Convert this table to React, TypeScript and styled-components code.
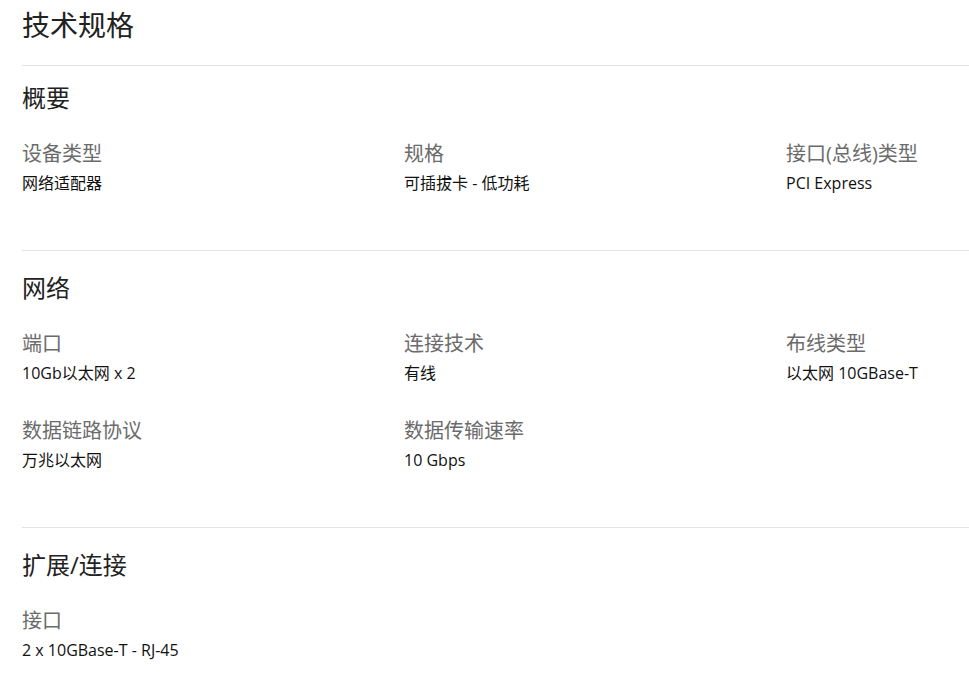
import styled, { createGlobalStyle } from 'styled-components';

type Spec = { label: string; value: string };
type Group = { title: string; specs: Spec[] };

const groups: Group[] = [
  {
    title: '概要',
    specs: [
      { label: '设备类型', value: '网络适配器' },
      { label: '规格', value: '可插拔卡 - 低功耗' },
      { label: '接口(总线)类型', value: 'PCI Express' },
    ],
  },
  {
    title: '网络',
    specs: [
      { label: '端口', value: '10Gb以太网 x 2' },
      { label: '连接技术', value: '有线' },
      { label: '布线类型', value: '以太网 10GBase-T' },
      { label: '数据链路协议', value: '万兆以太网' },
      { label: '数据传输速率', value: '10 Gbps' },
    ],
  },
  {
    title: '扩展/连接',
    specs: [{ label: '接口', value: '2 x 10GBase-T - RJ-45' }],
  },
];

export default function App() {
  return (
    <>
      <GlobalStyle />
      <StyledPage>
        <StyledTitle>技术规格</StyledTitle>
        {groups.map((g, index) => (
          <StyledSection key={g.title} $first={index === 0} $last={index === groups.length - 1}>
            <StyledHeading>{g.title}</StyledHeading>
            <StyledGrid>
              {g.specs.map((s) => (
                <StyledItem key={s.label}>
                  <StyledLabel>{s.label}</StyledLabel>
                  <StyledValue>{s.value}</StyledValue>
                </StyledItem>
              ))}
            </StyledGrid>
          </StyledSection>
        ))}
      </StyledPage>
    </>
  );
}

const GlobalStyle = createGlobalStyle`
  html, body {
    margin: 0;
    padding: 0;
    background: #fff;
    overflow-x: hidden;
  }
  body {
    font-family: 'Segoe UI', 'Open Sans', 'Noto Sans CJK SC', sans-serif;
    color: #000;
  }
`;

const StyledPage = styled.div`
  width: 1146px;
  padding-left: 22px;
`;

const StyledTitle = styled.h1`
  margin: 0;
  padding: 7px 0 22px;
  font-size: 28px;
  line-height: 36px;
  font-weight: 400;
  color: #222;
  border-bottom: 1px solid #e3e3e3;
`;

const StyledSection = styled.section<{ $first?: boolean; $last?: boolean }>`
  padding-top: ${(props) => (props.$first ? '16px' : '21px')};
  padding-bottom: ${(props) => (props.$last ? '0' : '56px')};
  border-bottom: ${(props) => (props.$last ? 'none' : '1px solid #e3e3e3')};
`;

const StyledHeading = styled.h2`
  margin: 0 0 26px;
  font-size: 24px;
  line-height: 32px;
  font-weight: 400;
  color: #222;
`;

const StyledGrid = styled.div`
  display: grid;
  grid-template-columns: repeat(3, 382px);
  row-gap: 33px;
`;

const StyledItem = styled.div`
  display: flex;
  flex-direction: column;
  gap: 4px;
`;

const StyledLabel = styled.div`
  font-size: 20px;
  line-height: 28px;
  color: #6b6b6b;
`;

const StyledValue = styled.div`
  font-size: 16px;
  line-height: 22px;
  color: #111;
`;
